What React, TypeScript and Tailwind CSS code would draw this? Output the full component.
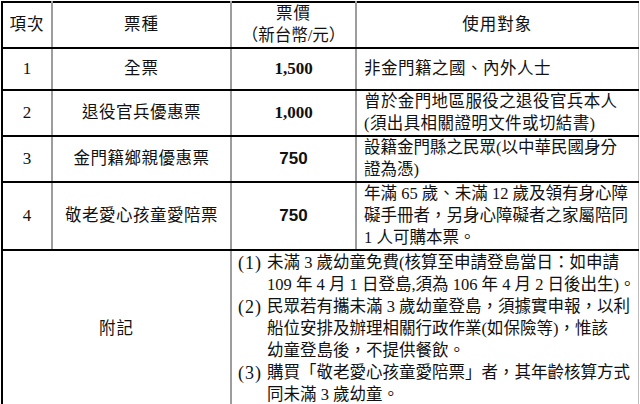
import React from 'react';

const font = "font-['Liberation_Serif','Noto_Sans_CJK_TC',serif]";
const cell = 'border-y-2 border-x-2 border-y-black border-x-[#9d9d9d] align-middle';
const last = 'border-r border-r-[#bdbdbd] whitespace-nowrap';

const notes: { label: string; lines: string[] }[] = [
  {
    label: '(1)',
    lines: ['未滿 3 歲幼童免費(核算至申請登島當日：如申請', '109 年 4 月 1 日登島,須為 106 年 4 月 2 日後出生)。'],
  },
  {
    label: '(2)',
    lines: ['民眾若有攜未滿 3 歲幼童登島，須據實申報，以利', '船位安排及辦理相關行政作業(如保險等)，惟該', '幼童登島後，不提供餐飲。'],
  },
  {
    label: '(3)',
    lines: ['購買「敬老愛心孩童愛陪票」者，其年齡核算方式', '同未滿 3 歲幼童。'],
  },
];

export default function App() {
  return (
    <div className={`w-[640px] h-[404px] bg-white text-[#111] pl-[1px] pt-[1px] ${font}`}>
      <table className="w-[636px] table-fixed text-[16.5px] leading-[22px]">
        <colgroup>
          <col className="w-[50px]" />
          <col className="w-[179px]" />
          <col className="w-[125px]" />
          <col className="w-[282px]" />
        </colgroup>
        <tbody>
          <tr className="h-[45px]">
            <td className={`${cell} border-l-black text-center tracking-[1px]`}>項次</td>
            <td className={`${cell} text-center tracking-[1px]`}>票種</td>
            <td className={`${cell} text-center`}>
              <div className="tracking-[1px]">票價</div>
              <div>（新台幣/元）</div>
            </td>
            <td className={`${cell} ${last} text-center tracking-[1px]`}>使用對象</td>
          </tr>
          <tr className="h-[42px]">
            <td className={`${cell} border-l-black text-center text-[17px]`}>1</td>
            <td className={`${cell} text-center tracking-[1px]`}>全票</td>
            <td className={`${cell} text-center font-bold text-[17px]`}>1,500</td>
            <td className={`${cell} ${last} pl-[7px] tracking-[0.5px]`}>非金門籍之國、內外人士</td>
          </tr>
          <tr className="h-[45px]">
            <td className={`${cell} border-l-black text-center text-[17px]`}>2</td>
            <td className={`${cell} text-center tracking-[0.5px]`}>退役官兵優惠票</td>
            <td className={`${cell} text-center font-bold text-[17px]`}>1,000</td>
            <td className={`${cell} ${last} pl-[7px] tracking-[0.4px]`}>
              <div>曾於金門地區服役之退役官兵本人</div>
              <div>(須出具相關證明文件或切結書)</div>
            </td>
          </tr>
          <tr className="h-[45px]">
            <td className={`${cell} border-l-black text-center text-[17px]`}>3</td>
            <td className={`${cell} text-center tracking-[0.5px]`}>金門籍鄉親優惠票</td>
            <td className={`${cell} text-center font-bold text-[17px] font-['Liberation_Sans',sans-serif]`}>750</td>
            <td className={`${cell} ${last} pl-[7px]`}>
              <div>設籍金門縣之民眾(以中華民國身分</div>
              <div>證為憑)</div>
            </td>
          </tr>
          <tr className="h-[68px]">
            <td className={`${cell} border-l-black text-center text-[17px]`}>4</td>
            <td className={`${cell} text-center tracking-[0.5px]`}>敬老愛心孩童愛陪票</td>
            <td className={`${cell} text-center font-bold text-[17px] font-['Liberation_Sans',sans-serif]`}>750</td>
            <td className={`${cell} ${last} pl-[7px]`}>
              <div>年滿 65 歲、未滿 12 歲及領有身心障</div>
              <div>礙手冊者，另身心障礙者之家屬陪同</div>
              <div>1 人可購本票。</div>
            </td>
          </tr>
          <tr className="h-[157px]">
            <td colSpan={2} className={`${cell} border-l-black text-center tracking-[1px]`}>附記</td>
            <td colSpan={2} className={`${cell} ${last} pl-[6px]`}>
              {notes.map((n) => (
                <div key={n.label} className="flex">
                  <span className="w-[29px] shrink-0 text-[18px] tracking-[1px]">{n.label}</span>
                  <div>
                    {n.lines.map((l) => (
                      <div key={l}>{l}</div>
                    ))}
                  </div>
                </div>
              ))}
            </td>
          </tr>
        </tbody>
      </table>
    </div>
  );
}
